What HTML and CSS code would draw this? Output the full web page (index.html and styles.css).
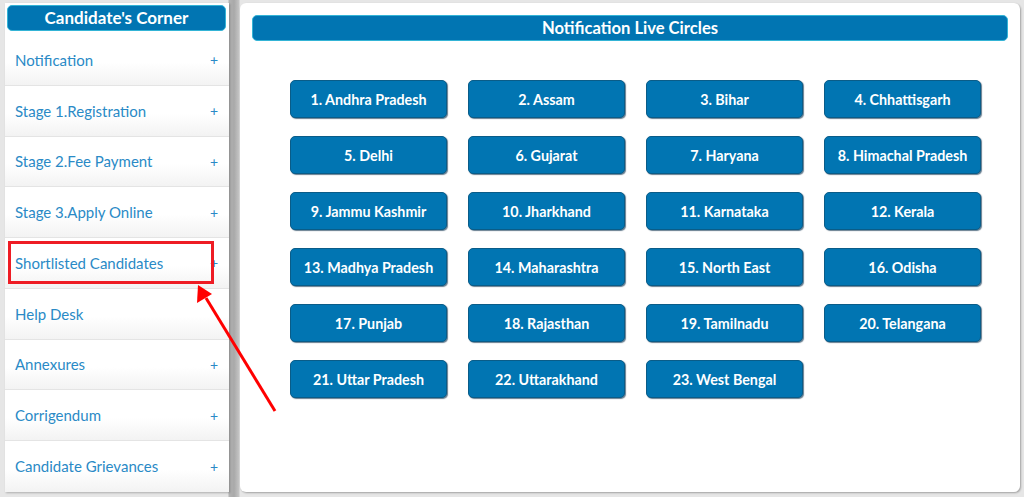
FILE: index.html
```html
<!DOCTYPE html>
<html>
<head>
<meta charset="utf-8">
<link rel="stylesheet" href="styles.css">
</head>
<body>
<div class="page">
  <aside class="sidebar">
    <div class="side-head">Candidate's Corner</div>
    <ul class="menu">
      <li class="item"><span>Notification</span><span class="plus">+</span></li>
      <li class="item"><span>Stage 1.Registration</span><span class="plus">+</span></li>
      <li class="item"><span>Stage 2.Fee Payment</span><span class="plus">+</span></li>
      <li class="item"><span>Stage 3.Apply Online</span><span class="plus">+</span></li>
      <li class="item"><span>Shortlisted Candidates</span><span class="plus">+</span></li>
      <li class="item"><span>Help Desk</span></li>
      <li class="item"><span>Annexures</span><span class="plus">+</span></li>
      <li class="item"><span>Corrigendum</span><span class="plus">+</span></li>
      <li class="item"><span>Candidate Grievances</span><span class="plus">+</span></li>
    </ul>
  </aside>
  <main class="panel">
    <div class="panel-head">Notification Live Circles</div>
    <div class="grid">
      <div class="btn">1. Andhra Pradesh</div>
      <div class="btn">2. Assam</div>
      <div class="btn">3. Bihar</div>
      <div class="btn">4. Chhattisgarh</div>
      <div class="btn">5. Delhi</div>
      <div class="btn">6. Gujarat</div>
      <div class="btn">7. Haryana</div>
      <div class="btn">8. Himachal Pradesh</div>
      <div class="btn">9. Jammu Kashmir</div>
      <div class="btn">10. Jharkhand</div>
      <div class="btn">11. Karnataka</div>
      <div class="btn">12. Kerala</div>
      <div class="btn">13. Madhya Pradesh</div>
      <div class="btn">14. Maharashtra</div>
      <div class="btn">15. North East</div>
      <div class="btn">16. Odisha</div>
      <div class="btn">17. Punjab</div>
      <div class="btn">18. Rajasthan</div>
      <div class="btn">19. Tamilnadu</div>
      <div class="btn">20. Telangana</div>
      <div class="btn">21. Uttar Pradesh</div>
      <div class="btn">22. Uttarakhand</div>
      <div class="btn">23. West Bengal</div>
    </div>
  </main>
</div>
<div class="highlight"></div>
<svg class="arrow" width="1024" height="497" viewBox="0 0 1024 497">
  <line x1="275" y1="411" x2="206" y2="298" stroke="#ff0000" stroke-width="3"/>
  <polygon points="198,285 197,303 212,294" fill="#ff0000"/>
</svg>
</body>
</html>
```
FILE: styles.css
```css
html, body {
  margin: 0;
  padding: 0;
}
body {
  width: 1024px;
  height: 497px;
  background: #d9d9d9;
  font-family: "Lato", "Open Sans", sans-serif;
  position: relative;
  overflow: hidden;
}
.page {
  display: flex;
  padding: 3px 4px 5px 5px;
  height: 497px;
  box-sizing: border-box;
  background: linear-gradient(to right, #e6e6e6 0, #e6e6e6 228px, #b3b3b3 229px, #a9a9a9 234px, #c4c4c4 239px, #e6e6e6 240px);
}
.sidebar {
  width: 224px;
  background: #fff;
  display: flex;
  flex-direction: column;
  padding-top: 2px;
  box-sizing: border-box;
  box-shadow: 1px 1px 2px rgba(0,0,0,0.25);
}
.side-head {
  margin: 0 3px 0 2px;
  height: 26px;
  background: #0175b2;
  border: 1px solid #34b4d6;
  border-radius: 5px;
  box-sizing: border-box;
  color: #fff;
  font-weight: bold;
  font-size: 17px;
  line-height: 24px;
  text-align: center;
}
.menu {
  list-style: none;
  margin: 4px 0 0;
  padding: 0;
}
.item {
  height: 50.75px;
  display: flex;
  align-items: center;
  justify-content: space-between;
  padding: 0 10px 0 10px;
  box-sizing: border-box;
  color: #2a8ac6;
  font-size: 15px;
  background: linear-gradient(to bottom, #ffffff 0, #ffffff 55%, #f3f3f3 100%);
  border-bottom: 1px solid #e4e4e4;
}
.item:last-child {
  border-bottom: none;
}
.plus {
  font-size: 14px;
  margin-right: 1px;
}
.panel {
  flex: 1;
  margin-left: 11px;
  background: #fff;
  border-radius: 6px;
  padding: 12px 12px 0 12px;
  box-sizing: border-box;
  box-shadow: 1px 1px 2px rgba(0,0,0,0.3);
}
.panel-head {
  height: 26px;
  background: #0175b2;
  border: 1px solid #34b4d6;
  border-radius: 5px;
  box-sizing: border-box;
  color: #fff;
  font-weight: bold;
  font-size: 16.6px;
  line-height: 24px;
  text-align: center;
}
.grid {
  display: grid;
  grid-template-columns: repeat(4, 157px);
  column-gap: 21px;
  row-gap: 18px;
  margin: 39px 0 0 38px;
}
.btn {
  height: 38px;
  background: #0175b2;
  border: 1px solid #0a5c88;
  border-radius: 5px;
  box-sizing: border-box;
  box-shadow: 1px 1px 1px rgba(0,40,70,0.6);
  color: #fff;
  font-weight: bold;
  font-size: 14.3px;
  display: flex;
  align-items: center;
  justify-content: center;
}
.highlight {
  position: absolute;
  left: 8px;
  top: 241px;
  width: 206px;
  height: 43px;
  border: 3px solid #ee1c24;
  box-sizing: border-box;
}
.arrow {
  position: absolute;
  left: 0;
  top: 0;
  pointer-events: none;
}
```
